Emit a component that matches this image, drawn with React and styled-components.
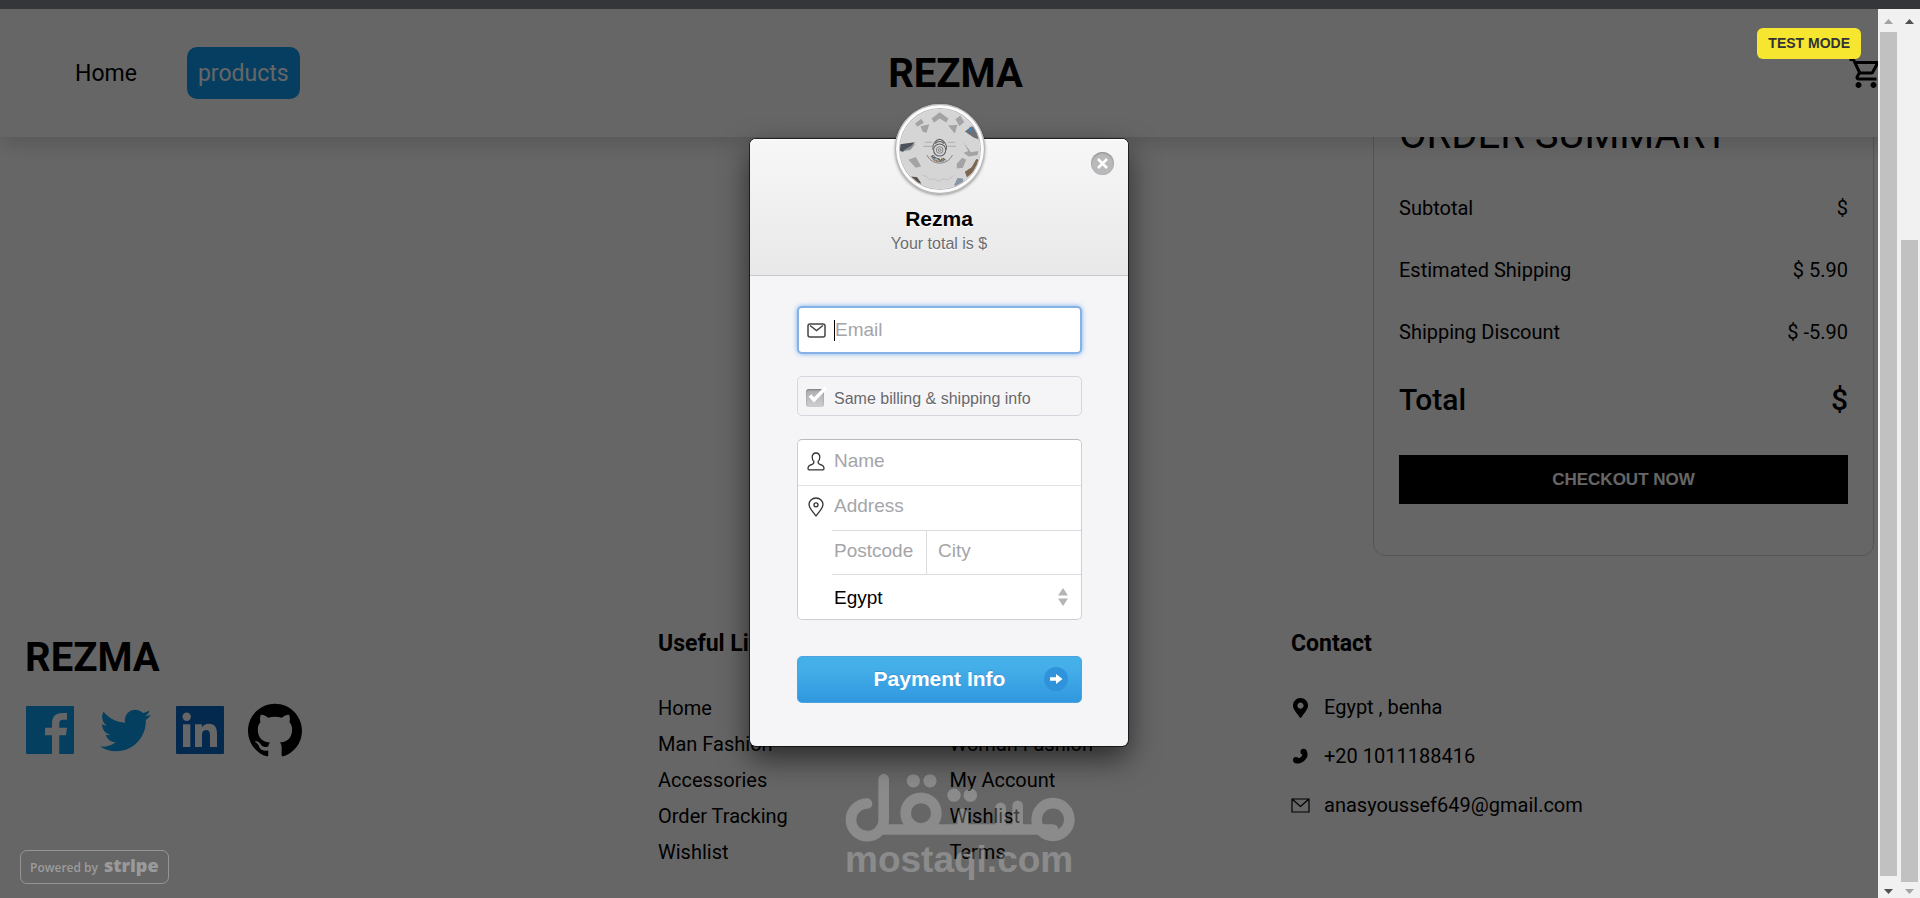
import React, { useState } from "react";
import styled, { createGlobalStyle } from "styled-components";
import { MdOutlineShoppingCart } from "react-icons/md";
import { FaMapMarkerAlt, FaTwitter } from "react-icons/fa";
import { SiGithub } from "react-icons/si";

const GlobalStyle = createGlobalStyle`
  * {
    box-sizing: border-box;
    margin: 0;
    padding: 0;
  }

  body {
    font-family: Roboto, sans-serif;
    background: #fff;
    color: #000;
    overflow: hidden;
  }

  a {
    color: inherit;
    text-decoration: none;
  }
`;

/* Window */
const Shell = styled.div`
  height: 100vh;
  display: flex;
  flex-direction: column;
`;

const BrowserEdge = styled.div`
  height: 9px;
  flex-shrink: 0;
  background: #35363a;
`;

const Viewport = styled.div`
  flex: 1;
  min-height: 0;
  display: flex;
`;

const Page = styled.div`
  position: relative;
  flex: 1;
  min-width: 0;
  overflow: hidden;
`;

/* Scrollbars */
const Track = styled.div`
  width: 21px;
  flex-shrink: 0;
  display: flex;
  flex-direction: column;
  align-items: center;
  justify-content: space-between;
  padding: 10px 0 4px;
  background: #f1f1f1;
`;

const Thumb = styled.div`
  width: 17px;
  flex: 1;
  margin-top: ${({ $top }) => $top}px;
  margin-bottom: ${({ $bottom }) => $bottom}px;
  background: #c1c1c1;
`;

/* Header */
const HeaderBar = styled.header`
  position: relative;
  z-index: 1;
  height: 128px;
  display: grid;
  grid-template-columns: 1fr auto 1fr;
  align-items: center;
  padding: 0 13px 0 25px;
  background: #fff;
  box-shadow: 0 10px 15px -3px rgba(0, 0, 0, 0.1),
    0 8px 30px rgba(0, 0, 0, 0.05);
`;

const Nav = styled.nav`
  display: flex;
  align-items: center;
  gap: 39px;
  padding-left: 39px;
`;

const NavLink = styled.a`
  padding: 13px 11px 11px;
  border-radius: 10px;
  font-size: 23px;
  line-height: 28px;
  background: ${({ $active }) => ($active ? "#0d9bf2" : "transparent")};
  color: ${({ $active }) => ($active ? "#fff" : "#000")};
`;

const Brand = styled.h1`
  font-size: 40px;
  line-height: 47px;
  font-weight: 700;
`;

const CartLink = styled.a`
  justify-self: end;
  display: flex;
  padding-right: 2px;
`;

/* Order summary */
const Content = styled.main`
  display: grid;
  grid-template-columns: 1fr 501px;
  padding: 0 25px;
  margin-top: -52px;
`;

const Summary = styled.section`
  grid-column: 2;
  display: flex;
  flex-direction: column;
  gap: 38px;
  padding: 25px 25px 51px;
  border: 1px solid lightgray;
  border-radius: 12px;
`;

const SummaryTitle = styled.h2`
  font-size: 40px;
  line-height: 47px;
  font-weight: 400;
`;

const SummaryItem = styled.div`
  display: flex;
  justify-content: space-between;
  font-size: ${({ $total }) => ($total ? 30 : 20)}px;
  line-height: ${({ $total }) => ($total ? 35 : 24)}px;
  font-weight: ${({ $total }) => ($total ? 500 : 400)};
`;

const CheckoutButton = styled.button`
  height: 49px;
  border: none;
  background: #000;
  color: #fff;
  font: bold 17px "Liberation Sans", Arial, sans-serif;
`;

/* Footer */
const FooterBar = styled.footer`
  display: grid;
  grid-template-columns: repeat(3, 1fr);
  padding-top: 74px;
`;

const Column = styled.div`
  padding: 0 25px;
`;

const FooterBrand = styled(Brand)`
  margin: 4px 0 19px;
`;

const Socials = styled.div`
  display: flex;
  gap: 15px;
  margin-left: -5px;
`;

const SocialLink = styled.a`
  width: 60px;
  height: 60px;
  display: grid;
  place-items: center;
  color: ${({ $color }) => $color};
`;

const ColumnTitle = styled.h3`
  font-size: 23px;
  line-height: 27px;
  font-weight: 700;
`;

const Links = styled.ul`
  list-style: none;
  display: grid;
  grid-template-columns: 1fr 1fr;
  margin-top: 33px;
  font-size: 20px;
  line-height: 36px;
`;

const ContactList = styled.address`
  margin-top: 26px;
  font-style: normal;
  font-size: 20px;
  line-height: 49px;
`;

const ContactItem = styled.div`
  display: flex;
  align-items: center;
  gap: 14px;

  svg {
    width: 19px;
    flex-shrink: 0;
  }
`;

/* Checkout overlay */
const Overlay = styled.div`
  position: absolute;
  inset: 0;
  z-index: 2;
  display: flex;
`;

const Backdrop = styled.div`
  position: relative;
  flex: 1;
  min-width: 0;
  padding-top: 130px;
  background: rgba(0, 0, 0, 0.6);
  font-family: "Liberation Sans", Arial, sans-serif;
`;

const TestMode = styled.span`
  position: absolute;
  top: 19px;
  right: 17px;
  padding: 0 11px;
  border-radius: 6px;
  background: #f6e62f;
  color: #333;
  font-size: 14px;
  font-weight: 700;
  line-height: 31px;
`;

const StripeBadge = styled.a`
  position: absolute;
  left: 20px;
  bottom: 14px;
  height: 34px;
  display: flex;
  align-items: center;
  gap: 6px;
  padding: 0 9px;
  border: 1px solid rgba(255, 255, 255, 0.3);
  border-radius: 7px;
  color: rgba(255, 255, 255, 0.36);
  font: 600 12px "Open Sans", sans-serif;

  strong {
    font-size: 18px;
    font-weight: 800;
    line-height: 28px;
    padding-bottom: 4px;
  }
`;

const Watermark = styled.div`
  position: absolute;
  left: calc(50% - 94px);
  bottom: 20px;
  width: 230px;
  opacity: 0.24;
  color: #fff;
  font-size: 37px;
  font-weight: 700;
  line-height: 36px;

  svg {
    display: block;
  }
`;

const Dialog = styled.section`
  position: relative;
  width: 378px;
  margin: 0 auto;
  border-radius: 6px;
  background: #f5f5f7;
  box-shadow: 0 0 0 1px rgba(0, 0, 0, 0.6), 0 12px 30px rgba(0, 0, 0, 0.6);
`;

const DialogHeader = styled.header`
  height: 137px;
  padding-top: 68px;
  border-bottom: 1px solid #c9c9cc;
  border-radius: 6px 6px 0 0;
  background: linear-gradient(#f7f7f8, #e8e8e9);
  box-shadow: inset 0 1px 0 #fff;
  text-align: center;
  text-shadow: 0 1px 0 #fff;
`;

const Avatar = styled.div`
  position: absolute;
  top: -35px;
  left: calc(50% - 44px);
  width: 90px;
  height: 90px;
  padding: 5px;
  border-radius: 50%;
  background: #fff;
  box-shadow: inset 0 0 0 1px #b4b4b6, inset 0 0 3px rgba(0, 0, 0, 0.3),
    0 1px 3px rgba(0, 0, 0, 0.4);

  svg {
    display: block;
    border-radius: 50%;
    box-shadow: 0 0 0 1px #b8b8ba;
  }
`;

const CloseButton = styled.button`
  position: absolute;
  top: 13px;
  right: 14px;
  width: 23px;
  height: 23px;
  display: grid;
  place-items: center;
  border: none;
  border-radius: 50%;
  background: #b9b9bb;
  box-shadow: inset 0 1px 2px rgba(0, 0, 0, 0.25);
`;

const ShopName = styled.h2`
  font-size: 21px;
  line-height: 24px;
`;

const ShopNote = styled.p`
  color: #6c6c70;
  font-size: 16px;
  line-height: 26px;
`;

const Form = styled.form`
  display: flex;
  flex-direction: column;
  padding: 30px 46px 43px 47px;
`;

const Input = styled.input`
  flex: 1;
  min-width: 0;
  height: 30px;
  border: none;
  outline: none;
  background: transparent;
  color: #000;
  font: 19px "Liberation Sans", Arial, sans-serif;

  &::placeholder {
    color: #a5a5a9;
    opacity: 1;
  }
`;

const EmailBox = styled.label`
  height: 48px;
  display: flex;
  align-items: center;
  padding-left: 8px;
  border: 2px solid #85b2e6;
  border-radius: 5px;
  background: #fff;
  box-shadow: 0 0 5px rgba(90, 155, 230, 0.8);
`;

const IconSlot = styled.span`
  width: 27px;
  flex-shrink: 0;
  display: flex;
`;

const Caret = styled.span`
  width: 1px;
  height: 21px;
  flex-shrink: 0;
  background: #000;
`;

const CheckRow = styled.label`
  height: 40px;
  display: flex;
  align-items: center;
  gap: 8px;
  margin: 22px 0 23px;
  padding: 5px 0 0 8px;
  border: 1px solid #d5d7df;
  border-radius: 5px;
  color: #68686c;
  font-size: 16px;
  text-shadow: 0 1px 0 #fff;
`;

const CheckWrap = styled.span`
  position: relative;
  display: flex;
  width: 20px;
  padding-bottom: 2px;

  svg {
    position: absolute;
    left: 2px;
    bottom: 6px;
    pointer-events: none;
  }
`;

const Check = styled.input`
  appearance: none;
  width: 18px;
  height: 18px;
  border-radius: 3px;
  background: linear-gradient(#adadaf, #cfcfd1);
  box-shadow: inset 0 1px 2px rgba(0, 0, 0, 0.3);
`;

const FieldGroup = styled.fieldset`
  min-width: 0;
  margin-bottom: 36px;
  border: 1px solid #cdced4;
  border-top-color: #b9b9c0;
  border-radius: 5px;
  background: #fff;

  input {
    padding-bottom: 2px;
  }
`;

const FieldBox = styled.label`
  height: 45px;
  display: flex;
  align-items: center;
  padding: 0 0 2px 9px;
  border-top: ${({ $line }) => ($line ? "1px solid #e3e3e6" : "none")};
`;

const SplitRow = styled.div`
  height: 45px;
  display: grid;
  grid-template-columns: 94px 1fr;
  margin-left: 34px;
  border: 1px solid #dcdce0;
  border-width: 1px 0;

  label {
    display: flex;
    align-items: center;
    padding: 0 0 2px 2px;
  }

  label + label {
    border-left: 1px solid #dcdce0;
    padding-left: 11px;
  }
`;

const CountryRow = styled.label`
  height: 44px;
  display: flex;
  align-items: center;
  padding: 0 13px 0 36px;
`;

const Select = styled.select`
  flex: 1;
  appearance: none;
  border: none;
  background: transparent;
  color: #000;
  font: 19px "Liberation Sans", Arial, sans-serif;
`;

const SubmitButton = styled.button`
  height: 47px;
  display: grid;
  grid-template-columns: 1fr auto 1fr;
  align-items: center;
  padding: 0 13px 2px;
  border: 1px solid #4da3dc;
  border-radius: 5px;
  background: linear-gradient(#45b1e8, #43ade8 30%, #3097de);
  color: #fff;
  font: bold 21px "Liberation Sans", Arial, sans-serif;
  text-shadow: 0 -1px 0 rgba(46, 86, 153, 0.3);

  span {
    grid-column: 2;
  }

  svg {
    justify-self: end;
  }
`;

const LINKS = [
  "Home",
  "Cart",
  "Man Fashion",
  "Woman Fashion",
  "Accessories",
  "My Account",
  "Order Tracking",
  "Wishlist",
  "Wishlist",
  "Terms",
];

const SUMMARY = [
  ["Subtotal", "$"],
  ["Estimated Shipping", "$ 5.90"],
  ["Shipping Discount", "$ -5.90"],
];

const Arrow = ({ down, color }) => (
  <svg width="9" height="5" viewBox="0 0 9 5" fill={color}>
    <path d={down ? "M0 0h9L4.5 5z" : "M0 5h9L4.5 0z"} />
  </svg>
);

const Scrollbar = ({ top, bottom, up, down }) => (
  <Track aria-hidden="true">
    <Arrow color={up} />
    <Thumb $top={top} $bottom={bottom} />
    <Arrow down color={down} />
  </Track>
);

const FacebookIcon = () => (
  <svg width="48" height="48" viewBox="0 0 48 48" fill="currentColor">
    <path d="M1 0h46a1 1 0 0 1 1 1v46a1 1 0 0 1-1 1H33.3V29.3H40l1-7.6h-7.7v-4.2c0-2.5 1-3.8 3.7-3.8h4V7h-5c-6.5 0-10 4-10 10.5v4.2h-7v7.6h7V48H1a1 1 0 0 1-1-1V1a1 1 0 0 1 1-1z" />
  </svg>
);

const LinkedinIcon = () => (
  <svg width="48" height="48" viewBox="0 0 48 48" fill="currentColor">
    <path
      fillRule="evenodd"
      d="M1 0h46a1 1 0 0 1 1 1v46a1 1 0 0 1-1 1H1a1 1 0 0 1-1-1V1a1 1 0 0 1 1-1zM10.7 6.5a4.2 4.2 0 1 0 0 8.4 4.2 4.2 0 0 0 0-8.4zM7 18.3V41h7.3V18.3zM19 18.3V41h7V29.8c0-3 .6-5.800 4.200-5.800s3.800 3.300 3.800 6v11h7V28.500c0-6.100-1.300-10.700-8.400-10.700-3.400 0-5.700 1.800-6.600 3.600h-.1v-3.100z"
    />
  </svg>
);

const PhoneIcon = () => (
  <svg height="17" viewBox="0 0 19 17">
    <path
      d="M13.5 4C15.500 8 11 13.500 5.500 13"
      fill="none"
      stroke="#000"
      strokeWidth="5"
      strokeLinecap="round"
    />
    <circle cx="12.500" cy="3.800" r="3" />
    <circle cx="5" cy="12" r="3" />
  </svg>
);

const MailOutline = () => (
  <svg height="15" viewBox="0 0 19 15" fill="none" stroke="#000" strokeWidth="1.2">
    <path d="M1 1h17v13H1zM1 1l8.5 7.5L18 1" />
  </svg>
);

const WatermarkLogo = () => (
  <svg width="230" height="69" viewBox="0 0 690 206">
    <g fill="none" stroke="#fff" strokeWidth="32" strokeLinecap="round">
      <path d="M66 91A49 49 0 1 0 116 139V18" />
      <path d="M116 169H624M353 169V122M467 169V104M518 169V98" />
      <circle cx="228" cy="120" r="46" />
      <circle cx="624" cy="139" r="49" />
    </g>
    <g fill="#fff">
      <circle cx="205" cy="23" r="20" />
      <circle cx="255" cy="23" r="20" />
      <circle cx="327" cy="66" r="20" />
      <circle cx="376" cy="66" r="20" />
    </g>
  </svg>
);

const ShopLogo = () => (
  <svg width="80" height="80" viewBox="29 25 238 238">
    <rect x="29" y="25" width="238" height="238" fill="#d5d5d6" />
    <g fill="#a3a3a5">
      <path d="M123 53l24-18 26 18-6 12-20-12-17 13z" />
      <path d="M74 68l18-14 8 12-20 12zM194 56l14-12 12 20-14 12z" />
      <path d="M90 76l26-6-8 26-12-4zM172 74l28-2-8 26z" />
      <path d="M54 176l22-8 16 28-16 4zM198 188l16-18 12 6-10 24-18 2z" />
      <path d="M218 124l22 30 22-4-2 12-26 4-16-10 14-6z" />
    </g>
    <path d="M222 92l20-16 14 8 8 32-16-6z" fill="#6d7076" />
    <path d="M236 76l8 12-6 6z" fill="#2f86c8" />
    <path d="M29 130l44-6-14 16-22 12-8-2z" fill="#4d525a" />
    <path d="M36 150l24-3 16-20z" fill="#8d9096" />
    <path d="M222 212l20-14 14-24 8 2-14 36-22 16z" fill="#7c6650" />
    <path d="M190 252l10-22 16 2 2 12-22 14z" fill="#8795a6" />
    <path d="M62 226l18 2 12 18-6 4z" fill="#58504a" />
    <path
      d="M94 222l14 4 10 10 14-4 10 8 16-8 14 4 18-14"
      fill="none"
      stroke="#b9b9bb"
      strokeWidth="2"
    />
    <g fill="none" stroke="#5c5c5e" strokeWidth="3">
      <circle cx="147" cy="147" r="18" />
      <circle cx="147" cy="147" r="10" strokeWidth="2" />
      <circle cx="147" cy="147" r="4" strokeWidth="2" />
      <path d="M127 146c-4-14 9-30 20-31 11 1 24 17 20 31M134 128c6-8 20-8 26 0" />
      <path d="M98 136h26M170 136h26M104 124h20M172 124h20" strokeWidth="1" />
      <path d="M109 162c16 32 60 32 76 0" strokeWidth="2" />
    </g>
    <path id="logo-arc" d="M116 162c14 28 48 28 64 0" fill="none" />
    <text fill="#444" fontSize="15" fontFamily="Liberation Sans" fontWeight="700">
      <textPath href="#logo-arc" startOffset="6">
        REZMA
      </textPath>
    </text>
  </svg>
);

const MailIcon = () => (
  <svg width="19" height="15" viewBox="0 0 19 15" fill="none" stroke="#444" strokeWidth="1.5">
    <rect x="1" y="1" width="17" height="13" rx="2" />
    <path d="M3 2.5l6.5 5L16 2.5" />
  </svg>
);

const PersonIcon = () => (
  <svg width="18" height="19" viewBox="0 0 18 19" fill="none" stroke="#333" strokeWidth="1.3">
    <path
      strokeLinejoin="round"
      d="M9 1C6.5 1 5 2.8 5.2 5.5c.1 2 .8 3.4 1.8 4.3 0 1.5-.4 2-1.8 2.5C2.5 13.2 1 13.7 1 16.5c0 .9.4 1.3 1.2 1.300h13.600c.8 0 1.200-.4 1.200-1.300 0-2.800-1.500-3.300-4.200-4.200-1.400-.5-1.800-1-1.800-2.500 1-.9 1.700-2.300 1.800-4.300C13 2.800 11.500 1 9 1z"
    />
  </svg>
);

const PinIcon = () => (
  <svg width="18" height="20" viewBox="0 0 18 20" fill="none" stroke="#333" strokeWidth="1.3">
    <path
      strokeLinejoin="round"
      d="M9 19C6 14.5 2 11.5 2 7.5 2 4 5 1 9 1s7 3 7 6.5c0 4-4 7-7 11.5z"
    />
    <circle cx="9" cy="7.8" r="2" />
  </svg>
);

const CheckMark = () => (
  <svg width="20" height="17" viewBox="0 0 20 17" fill="none" stroke="#fff" strokeWidth="3.5">
    <path d="M2 9.5l4 4.5L18 1.5" />
  </svg>
);

const Header = () => (
  <HeaderBar>
    <Nav>
      <NavLink href="#home">Home</NavLink>
      <NavLink href="#products" $active>
        products
      </NavLink>
    </Nav>
    <Brand>REZMA</Brand>
    <CartLink href="#cart" aria-label="Cart">
      <MdOutlineShoppingCart size={36} />
    </CartLink>
  </HeaderBar>
);

const OrderSummary = () => (
  <Content>
    <Summary>
      <SummaryTitle>ORDER SUMMARY</SummaryTitle>
      {SUMMARY.map(([label, price]) => (
        <SummaryItem key={label}>
          <span>{label}</span>
          <span>{price}</span>
        </SummaryItem>
      ))}
      <SummaryItem $total>
        <span>Total</span>
        <span>$</span>
      </SummaryItem>
      <CheckoutButton>CHECKOUT NOW</CheckoutButton>
    </Summary>
  </Content>
);

const Footer = () => (
  <FooterBar>
    <Column>
      <FooterBrand as="h2">REZMA</FooterBrand>
      <Socials>
        <SocialLink href="#facebook" aria-label="Facebook" $color="#0a9df0">
          <FacebookIcon />
        </SocialLink>
        <SocialLink href="#twitter" aria-label="Twitter" $color="#0a9df0">
          <FaTwitter size={51} />
        </SocialLink>
        <SocialLink href="#linkedin" aria-label="LinkedIn" $color="#0a66c2">
          <LinkedinIcon />
        </SocialLink>
        <SocialLink href="#github" aria-label="GitHub" $color="#000">
          <SiGithub size={54} />
        </SocialLink>
      </Socials>
    </Column>
    <Column>
      <ColumnTitle>Useful Links</ColumnTitle>
      <Links>
        {LINKS.map((text, i) => (
          <li key={i}>
            <a href="#link">{text}</a>
          </li>
        ))}
      </Links>
    </Column>
    <Column>
      <ColumnTitle>Contact</ColumnTitle>
      <ContactList>
        <ContactItem>
          <FaMapMarkerAlt size={20} /> Egypt , benha
        </ContactItem>
        <ContactItem>
          <PhoneIcon /> +20 1011188416
        </ContactItem>
        <ContactItem>
          <MailOutline /> anasyoussef649@gmail.com
        </ContactItem>
      </ContactList>
    </Column>
  </FooterBar>
);

const CheckoutDialog = () => {
  const [same, setSame] = useState(true);

  return (
    <Dialog role="dialog" aria-label="Rezma checkout">
      <Avatar>
        <ShopLogo />
      </Avatar>
      <CloseButton aria-label="Close">
        <svg width="11" height="11" viewBox="0 0 11 11" stroke="#fff" strokeWidth="2.5">
          <path d="M1 1l9 9M10 1l-9 9" />
        </svg>
      </CloseButton>
      <DialogHeader>
        <ShopName>Rezma</ShopName>
        <ShopNote>Your total is $</ShopNote>
      </DialogHeader>
      <Form onSubmit={(e) => e.preventDefault()}>
        <EmailBox>
          <IconSlot>
            <MailIcon />
          </IconSlot>
          <Caret />
          <Input type="email" placeholder="Email" aria-label="Email" />
        </EmailBox>
        <CheckRow>
          <CheckWrap>
            <Check
              type="checkbox"
              checked={same}
              onChange={(e) => setSame(e.target.checked)}
            />
            {same && <CheckMark />}
          </CheckWrap>
          Same billing &amp; shipping info
        </CheckRow>
        <FieldGroup>
          <FieldBox>
            <IconSlot>
              <PersonIcon />
            </IconSlot>
            <Input placeholder="Name" aria-label="Name" />
          </FieldBox>
          <FieldBox $line>
            <IconSlot>
              <PinIcon />
            </IconSlot>
            <Input placeholder="Address" aria-label="Address" />
          </FieldBox>
          <SplitRow>
            <label>
              <Input placeholder="Postcode" aria-label="Postcode" />
            </label>
            <label>
              <Input placeholder="City" aria-label="City" />
            </label>
          </SplitRow>
          <CountryRow>
            <Select defaultValue="Egypt" aria-label="Country">
              <option>Egypt</option>
            </Select>
            <svg width="10" height="18" viewBox="0 0 10 18" fill="#b5b5b8">
              <path d="M0 7.5h10L5 0zM0 10.5h10L5 18z" />
            </svg>
          </CountryRow>
        </FieldGroup>
        <SubmitButton type="submit">
          <span>Payment Info</span>
          <svg width="24" height="24" viewBox="0 0 24 24">
            <circle cx="12" cy="12" r="12" fill="#2f93dc" />
            <path d="M6 10.2h6V7l6.5 5-6.500 5v-3.200H6z" fill="#fff" />
          </svg>
        </SubmitButton>
      </Form>
    </Dialog>
  );
};

const App = () => (
  <>
    <GlobalStyle />
    <Shell>
      <BrowserEdge />
      <Viewport>
        <Page>
          <Header />
          <OrderSummary />
          <Footer />
          <Overlay>
            <Backdrop>
              <Watermark aria-hidden="true">
                <WatermarkLogo />
                mostaql.com
              </Watermark>
              <TestMode>TEST MODE</TestMode>
              <StripeBadge href="#stripe">
                Powered by <strong>stripe</strong>
              </StripeBadge>
              <CheckoutDialog />
            </Backdrop>
            <Scrollbar top={8} bottom={13} up="#a3a3a3" down="#505050" />
          </Overlay>
        </Page>
        <Scrollbar top={216} bottom={7} up="#505050" down="#a3a3a3" />
      </Viewport>
    </Shell>
  </>
);

export default App;
